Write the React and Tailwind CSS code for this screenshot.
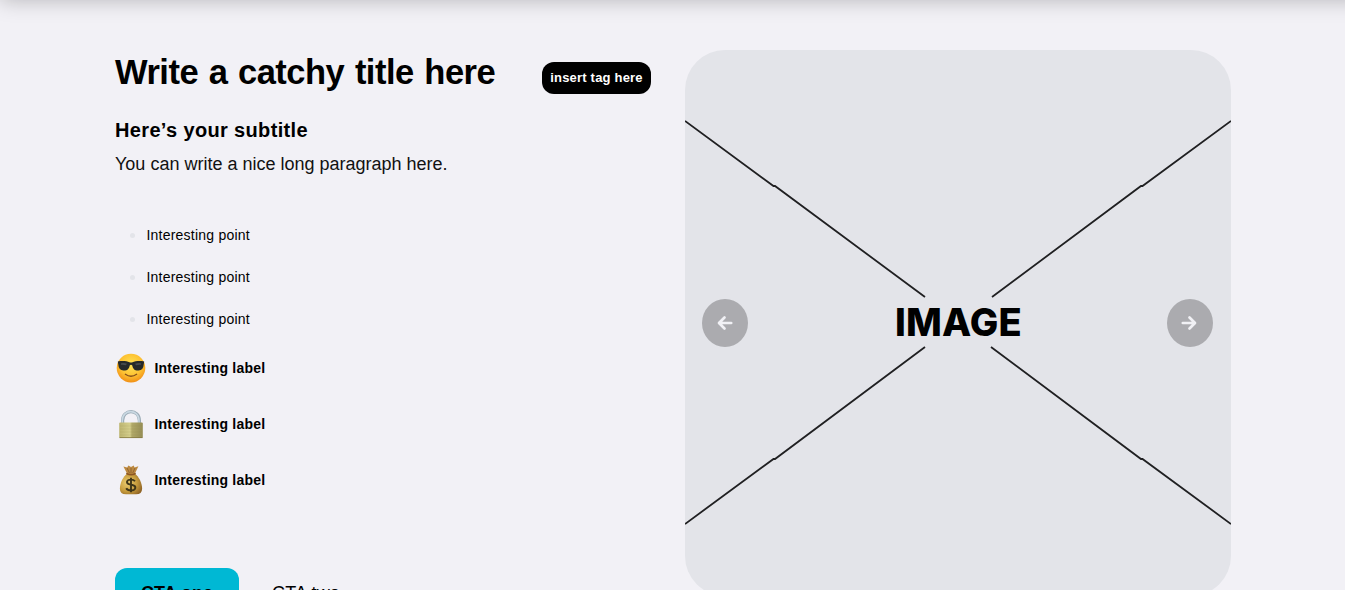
const points = ["Interesting point", "Interesting point", "Interesting point"];

function Sunglasses() {
  return (
    <svg viewBox="0 0 32 32" className="h-8 w-8 shrink-0">
      <defs>
        <radialGradient id="face" cx=".5" cy=".38" r=".64">
          <stop offset="0" stopColor="#ffe554" />
          <stop offset=".6" stopColor="#fdc233" />
          <stop offset="1" stopColor="#f08c14" />
        </radialGradient>
      </defs>
      <circle cx="16" cy="16.1" r="14.3" fill="url(#face)" />
      <path d="M2.8 9.6C7 8.6 12 9.2 14.4 10.2Q16 10.8 17.6 10.2C20 9.2 25 8.6 29.2 9.6L28.8 12Q28.4 18.4 23.5 18.6C19.6 18.8 18 16.8 17.3 13.4Q16 12 14.7 13.4C14 16.8 12.4 18.8 8.5 18.6Q3.6 18.4 3.2 12Z" fill="#25292a" />
      <path d="M6 11.2Q9 10.6 12 11.7L10.8 13.3Q8 12.7 6.2 12.9ZM20 11.7Q23 10.6 26 11.2L25.8 12.9Q24 12.7 21 13.3Z" fill="#686e70" opacity=".5" />
      <path d="M10.4 22.3Q16 26.3 21.6 22.3" fill="none" stroke="#86501b" strokeWidth="1.4" strokeLinecap="round" />
    </svg>
  );
}

function Padlock() {
  return (
    <svg viewBox="0 0 32 32" className="h-8 w-8 shrink-0">
      <defs>
        <linearGradient id="brass">
          <stop offset="0" stopColor="#bdb571" />
          <stop offset=".46" stopColor="#d5cf8d" />
          <stop offset=".54" stopColor="#b1a968" />
          <stop offset="1" stopColor="#958d55" />
        </linearGradient>
      </defs>
      <path d="M7.6 16V12.5C7.6 .6 24.4 .6 24.4 12.5V16" fill="none" stroke="#9babb6" strokeWidth="3.2" />
      <path d="M7.3 16V12.5C7.3 .6 24 .6 24 12.5V16" fill="none" stroke="#c9d8e2" strokeWidth="1.6" />
      <rect x="4.2" y="14.6" width="23.6" height="15.5" rx="1" fill="url(#brass)" />
      <path d="M5 18H27M5 21H27M5 24H27M5 27H27" stroke="#8e8447" strokeWidth=".5" opacity=".3" />
      <path d="M4.5 29.6H27.5" stroke="#81763f" strokeWidth=".8" />
    </svg>
  );
}

function MoneyBag() {
  return (
    <svg viewBox="0 0 32 32" className="h-8 w-8 shrink-0">
      <defs>
        <radialGradient id="sack" cx=".35" cy=".45" r=".7">
          <stop offset="0" stopColor="#edce72" />
          <stop offset=".6" stopColor="#c69b3c" />
          <stop offset="1" stopColor="#916526" />
        </radialGradient>
      </defs>
      <path d="M12.5 10.5L8.4 2.4 12.2 3.6 13.4 1.4 16 3 18.7 1.4 19.5 3.6 23.4 2.2 19.5 10.5Z" fill="#bd8940" />
      <path d="M12 4L14.5 9M16 4V9M20 4L17.7 9" stroke="#855a2b" strokeWidth=".8" />
      <path d="M12.5 9.5C8 12.5 4.9 19 4.9 24.8Q4.9 30.3 11 30.3H21Q27.1 30.3 27.1 24.8C27.1 19 24 12.5 19.5 9.5Z" fill="url(#sack)" />
      <path d="M12 9.7Q16 11.7 20 9.7" fill="none" stroke="#8c5522" strokeWidth="1.8" strokeLinecap="round" />
      <path d="M20 17.2Q18.8 15.6 16 15.6C11 15.6 10.8 19.6 14.7 20.4L17.4 21C21.8 22 21.2 26.4 16 26.4Q12.4 26.4 11.2 24.2M16 13.8V28.2" fill="none" stroke="#3f3518" strokeWidth="1.9" />
    </svg>
  );
}

const labels = [
  { Icon: Sunglasses, text: "Interesting label" },
  { Icon: Padlock, text: "Interesting label" },
  { Icon: MoneyBag, text: "Interesting label" },
];

function ArrowButton({ flip = false }) {
  return (
    <button aria-label={flip ? "Next" : "Previous"} className="flex h-12 w-[46px] items-center justify-center rounded-[50%] bg-[#ababaf]">
      <svg viewBox="0 0 16 16" className={flip ? "mr-0.5 h-4 w-4 rotate-180" : "h-4 w-4"}>
        <path d="M7.5 2.5L2 8L7.5 13.5M2.5 8H14.2" fill="none" stroke="#f1f1f5" strokeWidth="2.7" strokeLinecap="round" strokeLinejoin="round" />
      </svg>
    </button>
  );
}

function ImagePanel() {
  return (
    <section className="relative h-[546px] w-[546px] shrink-0 overflow-hidden rounded-[40px] bg-[#e3e4e9]">
      <svg viewBox="0 0 546 546" className="absolute inset-0 h-full w-full">
        <path d="M0 71L88.5 136H90L240 247M546 71L457.5 136H456L307 247M0 474L88.5 409H90L240 297M546 474L457.5 409H456L306 297" fill="none" stroke="#202022" strokeWidth="1.8" />
      </svg>
      <div className="relative flex h-full items-center justify-between pr-[18px] pl-[17px]">
        <ArrowButton />
        <span className="pb-0.5 pl-0.5 font-[Inter,sans-serif] text-[38px] leading-none font-extrabold tracking-[0.2px] text-black">IMAGE</span>
        <ArrowButton flip />
      </div>
    </section>
  );
}

export default function App() {
  return (
    <div className="relative h-[590px] overflow-hidden bg-[#f2f1f6] font-['Liberation_Sans',Arial,sans-serif] text-black">
      <div className="absolute -right-5 left-0 -top-20 h-20 shadow-[0_0_20px_rgba(0,0,0,0.25)]" />
      <main className="flex pt-[50px] pl-[115px]">
        <section className="w-[570px] shrink-0">
          <div className="flex h-[60px] items-start">
            <h1 className="w-[427px] pt-[2px] text-[34.5px] leading-10 font-bold tracking-[-0.5px] whitespace-nowrap [word-spacing:1.5px]">Write a catchy title here</h1>
            <span className="mt-3 flex h-8 w-[109px] items-center justify-center rounded-xl bg-black text-[13px] font-bold tracking-[0.2px] whitespace-nowrap text-white">insert tag here</span>
          </div>
          <h2 className="mt-1.5 text-xl leading-7 font-bold tracking-[0.35px]">Here’s your subtitle</h2>
          <p className="mt-1.5 text-lg leading-7 text-[#111]">You can write a nice long paragraph here.</p>
          <ul className="mt-[46px] text-sm tracking-[0.22px]">
            {points.map((text, i) => (
              <li key={i} className="flex h-[42px] items-start leading-[22px]">
                <span className="mt-[9px] mr-[11.5px] ml-[15px] h-[5px] w-[5px] rounded-full bg-[#e3e4e9]" />
                {text}
              </li>
            ))}
          </ul>
          <div className="mt-[2px] flex flex-col gap-6">
            {labels.map(({ Icon, text }, i) => (
              <div key={i} className="flex h-8 items-center gap-[7.5px] text-sm font-bold tracking-[0.2px]">
                <Icon />
                <span>{text}</span>
              </div>
            ))}
          </div>
          <div className="mt-[72px] flex text-lg leading-12">
            <button className="h-12 w-[124px] rounded-xl bg-[#00b8d4] pt-px font-bold">CTA one</button>
            <button className="ml-[33px] pt-px tracking-[0.2px]">CTA two</button>
          </div>
        </section>
        <ImagePanel />
      </main>
    </div>
  );
}
